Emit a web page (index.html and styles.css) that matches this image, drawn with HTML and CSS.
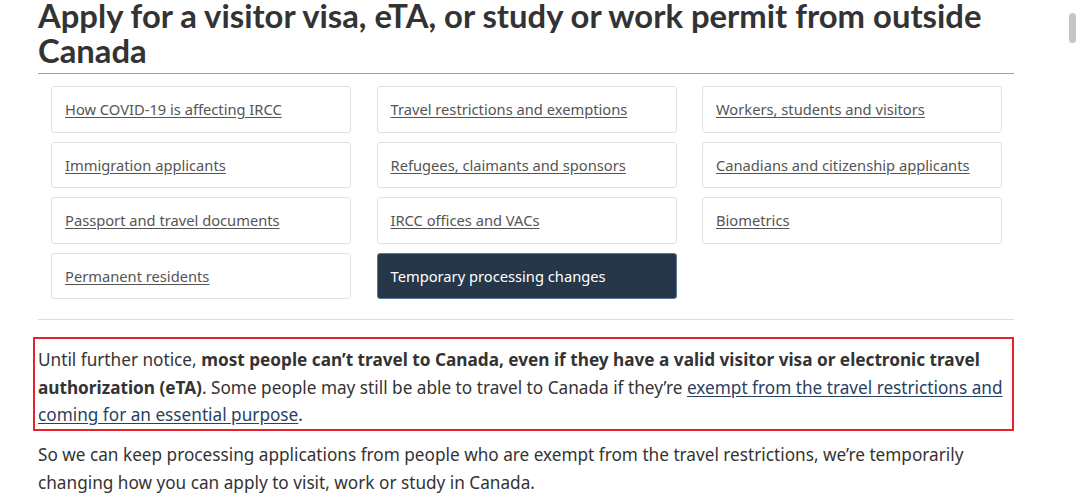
FILE: index.html
```html
<!DOCTYPE html>
<html lang="en">
<head>
<meta charset="utf-8">
<link rel="stylesheet" href="styles.css">
</head>
<body>
<main class="page">
  <h1 class="title">Apply for a visitor visa, eTA, or study or work permit from outside Canada</h1>
  <nav class="cards">
    <a class="card" href="#"><span>How COVID-19 is affecting IRCC</span></a>
    <a class="card" href="#"><span>Travel restrictions and exemptions</span></a>
    <a class="card" href="#"><span>Workers, students and visitors</span></a>
    <a class="card" href="#"><span>Immigration applicants</span></a>
    <a class="card" href="#"><span>Refugees, claimants and sponsors</span></a>
    <a class="card" href="#"><span>Canadians and citizenship applicants</span></a>
    <a class="card" href="#"><span>Passport and travel documents</span></a>
    <a class="card" href="#"><span>IRCC offices and VACs</span></a>
    <a class="card" href="#"><span>Biometrics</span></a>
    <a class="card" href="#"><span>Permanent residents</span></a>
    <a class="card active" href="#"><span>Temporary processing changes</span></a>
  </nav>
  <hr class="sep">
  <div class="notice">
    <p>Until further notice, <strong>most people can’t travel to Canada, even if they have a valid visitor visa or electronic travel authorization (eTA)</strong>. Some people may still be able to travel to Canada if they’re <a class="link" href="#">exempt from the travel restrictions and coming for an essential purpose</a>.</p>
  </div>
  <p class="para">So we can keep processing applications from people who are exempt from the travel restrictions, we’re temporarily changing how you can apply to visit, work or study in Canada.</p>
</main>
<div class="scrollthumb"></div>
</body>
</html>
```
FILE: styles.css
```css
html, body {
  margin: 0;
  padding: 0;
  background: #fff;
  overflow: hidden;
}
body {
  font-family: "Noto Sans", "DejaVu Sans", sans-serif;
  color: #333;
}
.page {
  width: 976px;
  margin-left: 38px;
  padding-top: 1px;
}
.title {
  font-family: Lato, "Liberation Sans", sans-serif;
  font-weight: 700;
  font-size: 32.8px;
  line-height: 35px;
  margin: -3px 0 0 0;
  padding: 0 0 5px 0;
  color: #333;
  border-bottom: 1px solid #cf8d8f;
}
.cards {
  display: grid;
  grid-template-columns: repeat(3, 300px);
  column-gap: 25.5px;
  row-gap: 9px;
  margin: 12px 0 0 13px;
}
.card {
  display: flex;
  align-items: center;
  height: 46.5px;
  box-sizing: border-box;
  padding: 0 13px;
  border: 1px solid #e1e1e1;
  border-radius: 3px;
  font-size: 14.7px;
  color: #555;
  text-decoration: underline;
  text-underline-offset: 2px;
}
.card.active {
  background: #26374a;
  border-color: #5a7896;
  color: #fff;
  text-decoration: none;
}
.sep {
  border: 0;
  border-top: 1px solid #dcdcdc;
  margin: 20px 0 0 0;
}
.notice {
  margin: 17px 0 0 -5px;
  border: 2px solid #e8222a;
  padding: 7px 5px 0 3px;
}
.notice p, .para {
  margin: 0;
  font-size: 17.2px;
  line-height: 27.7px;
  color: #333;
}
.notice strong {
  font-weight: 700;
}
.link {
  color: #284162;
  text-decoration: underline;
  text-underline-offset: 2px;
}
.para {
  margin-top: 10px;
}
.scrollthumb {
  position: fixed;
  top: 13px;
  right: 4px;
  width: 7px;
  height: 30px;
  border-radius: 4px;
  background: #c4c5c9;
}
```
